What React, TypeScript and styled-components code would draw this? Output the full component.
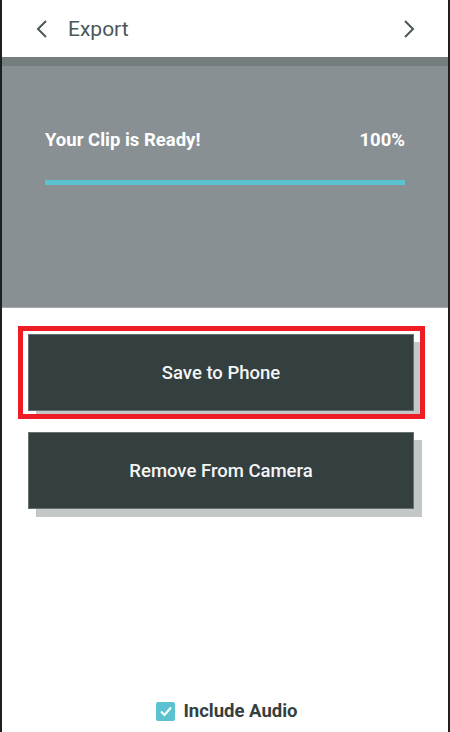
import React from "react"
import styled, { createGlobalStyle } from "styled-components"

const GlobalStyle = createGlobalStyle`
    html, body {
        margin: 0;
        padding: 0;
        background: #1e1f1f;
    }
    body {
        font-family: Roboto, "Liberation Sans", sans-serif;
    }
`;

const Screen = styled.div`
    margin: 0 2px;
    height: 732px;
    background: #fff;
    display: flex;
    flex-direction: column;
`;

const Header = styled.header`
    height: 57px;
    display: flex;
    align-items: center;
    padding: 0 30px 0 31px;
    color: #4b5657;
`;

const NavIcon = styled.svg`
    width: 18px;
    height: 20px;
    flex: none;
`;

const Title = styled.h1`
    margin: 0 0 0 17px;
    font-size: 21px;
    font-weight: 400;
    flex: 1;
`;

const Banner = styled.section`
    height: 251px;
    background: #899094;
    border-top: 9px solid #747e7e;
    border-bottom: 1px solid #a3a9ab;
    box-sizing: border-box;
    padding: 63px 43px 0 43px;
`;

const StatusRow = styled.div`
    display: flex;
    justify-content: space-between;
    color: #fff;
    font-size: 18.5px;
    font-weight: 700;
`;

const Track = styled.div`
    margin-top: 29px;
    height: 5px;
    background: #6f777a;
`;

const Fill = styled.div`
    height: 100%;
    background: #5bc3d0;
`;

const Actions = styled.div`
    padding: 18px 0 0 16px;
    display: flex;
    flex-direction: column;
    gap: 5px;
`;

const Focus = styled.div<{ $active?: boolean }>`
    width: 407px;
    height: 93px;
    box-sizing: border-box;
    padding: 3px 0 0 5px;
    border: 5px solid ${p => (p.$active ? "#ee1c25" : "transparent")};
    overflow: ${p => (p.$active ? "hidden" : "visible")};
`;

const ActionButton = styled.button`
    display: block;
    width: 386px;
    height: 77px;
    background: #343f40;
    border: 1px solid #687072;
    color: #f4f5f5;
    font-family: Roboto, "Liberation Sans", sans-serif;
    font-size: 18.5px;
    font-weight: 500;
    box-shadow: 8px 8px 0 #c4c7c8;
    cursor: pointer;
`;

const Spacer = styled.div`
    flex: 1;
`;

const AudioToggle = styled.label`
    display: flex;
    align-items: center;
    justify-content: center;
    gap: 8px;
    padding: 0 0 10px 4px;
    color: #343f40;
    font-size: 18.5px;
    font-weight: 700;
`;

const Box = styled.span`
    width: 19px;
    height: 19px;
    border-radius: 2px;
    background: #5bc3d0;
    display: flex;
    align-items: center;
    justify-content: center;
`;

const App = () => {
    const progress = 100;

    return (
        <>
            <GlobalStyle />
            <Screen>
                <Header>
                    <NavIcon viewBox="0 0 18 20" fill="none" stroke="currentColor" strokeWidth="2">
                        <path d="M13 2 L5 10 L13 18" />
                    </NavIcon>
                    <Title>Export</Title>
                    <NavIcon viewBox="0 0 18 20" fill="none" stroke="currentColor" strokeWidth="2">
                        <path d="M5 2 L13 10 L5 18" />
                    </NavIcon>
                </Header>
                <Banner>
                    <StatusRow>
                        <span>Your Clip is Ready!</span>
                        <span>{progress}%</span>
                    </StatusRow>
                    <Track>
                        <Fill style={{ width: `${progress}%` }} />
                    </Track>
                </Banner>
                <Actions>
                    <Focus $active>
                        <ActionButton>Save to Phone</ActionButton>
                    </Focus>
                    <Focus>
                        <ActionButton>Remove From Camera</ActionButton>
                    </Focus>
                </Actions>
                <Spacer />
                <AudioToggle>
                    <Box>
                        <svg width="14" height="14" viewBox="0 0 14 14" fill="none" stroke="#fff" strokeWidth="2">
                            <path d="M2 7.5 L5.5 11 L12 3.5" />
                        </svg>
                    </Box>
                    Include Audio
                </AudioToggle>
            </Screen>
        </>
    )
}

export default App;
